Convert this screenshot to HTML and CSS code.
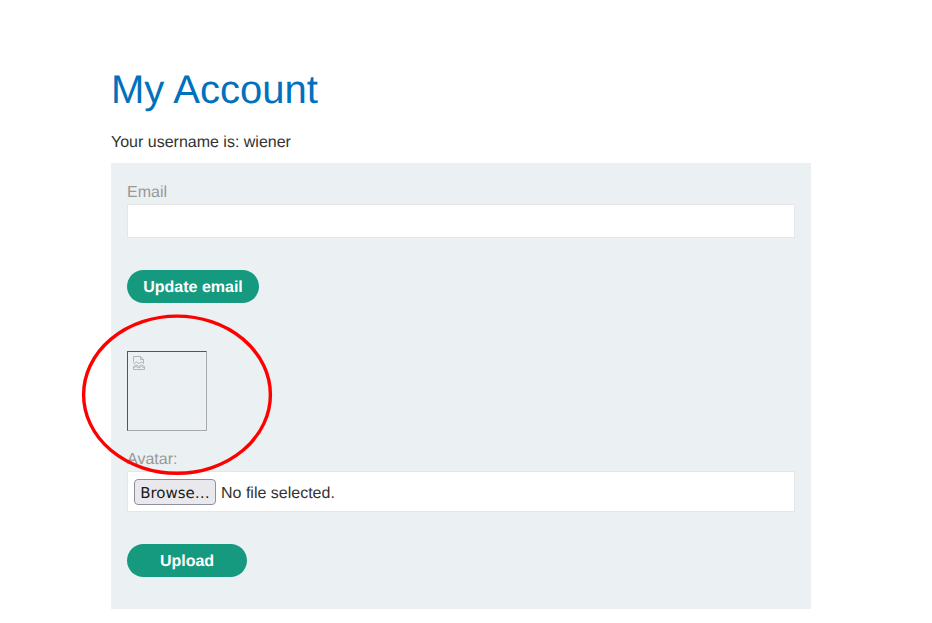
FILE: index.html
```html
<!DOCTYPE html>
<html lang="en">

<head>
    <meta charset="UTF-8">
    <meta name="viewport" content="width=device-width, initial-scale=1.0">
    <title>My Account</title>
    <link rel="stylesheet" href="styles.css">
</head>

<body>
    <div class="container">
        <h1>My Account</h1>
        <p class="username">Your username is: wiener</p>

        <div class="panel">
            <form class="email-form">
                <label class="field-label" for="email">Email</label>
                <input class="email-input" type="text" id="email">
                <button class="btn btn-update" type="button">Update email</button>
            </form>

            <form class="avatar-form">
                <div class="broken-img">
                    <svg class="broken-icon" width="12" height="14" viewBox="0 0 12 14" fill="none" stroke="#b4b8ba" stroke-width="1">
                        <path d="M.5 6.5V.5H7.5L10.5 3.5V7.5L8.5 6L6 7.5L3.5 6L.5 8"/>
                        <path d="M7.5 .5V3.5H10.5"/>
                        <path d="M.5 13.5V10.5L3 9L6 10.5L8.5 9L11.5 10.5V13.5Z"/>
                        <path d="M.5 12L3 10.5L6 12L8.5 10.5L11.5 12"/>
                    </svg>
                </div>
                <label class="field-label avatar-label">Avatar:</label>
                <div class="file-box">
                    <button class="browse" type="button">Browse…</button>
                    <span class="file-name">No file selected.</span>
                </div>
                <button class="btn btn-upload" type="button">Upload</button>
            </form>

            <!-- red circle marked on the screenshot -->
            <svg class="marker" width="194" height="164" viewBox="0 0 194 164" fill="none">
                <ellipse cx="97" cy="82.7" rx="93.4" ry="78.6" stroke="#fe0000" stroke-width="3.4"/>
            </svg>
        </div>
    </div>
</body>

</html>
```

FILE: styles.css
```css
body {
    margin: 0;
    padding: 0;
    background: #fff;
    font-family: "Liberation Sans", Arial, sans-serif;
    font-size: 16px;
    color: #333332;
    text-rendering: geometricPrecision;
}

.container {
    width: 700px;
    margin-left: 111px;
    padding-top: 67px;
    padding-bottom: 14px;
}

h1 {
    margin: 0;
    font-size: 40px;
    font-weight: 400;
    line-height: 46px;
    color: #0071bc;
}

.username {
    margin: 21px 0 0 0;
    line-height: 18px;
}

.panel {
    position: relative;
    margin-top: 11px;
    height: 446px;
    padding: 21px 16px 0 16px;
    box-sizing: border-box;
    background: #ebf0f2;
}

.field-label {
    display: block;
    line-height: 18px;
    color: #999;
}

.email-input {
    display: block;
    width: 100%;
    height: 34px;
    margin-top: 2px;
    padding: 0;
    background: #fff;
    border: 1px solid #e6e6e6;
    box-sizing: border-box;
}

.btn {
    display: block;
    height: 33px;
    padding: 2px 0 0 0;
    border: none;
    border-radius: 17px;
    background: #159a7f;
    color: #fff;
    font-family: inherit;
    font-size: 16px;
    font-weight: 700;
    text-rendering: geometricPrecision;
}

.btn-update {
    width: 132px;
    margin-top: 32px;
}

.avatar-form {
    margin-top: 48px;
}

.broken-img {
    width: 80px;
    height: 80px;
    padding: 4px 0 0 5px;
    box-sizing: border-box;
    border: 1px solid;
    border-color: #555 #a9a9a9 #a9a9a9 #555;
}

.broken-icon {
    display: block;
}

.avatar-label {
    margin-top: 20px;
}

.file-box {
    display: flex;
    align-items: center;
    gap: 5px;
    height: 41px;
    margin-top: 2px;
    padding-left: 6px;
    background: #fff;
    border: 1px solid #e6e6e6;
    box-sizing: border-box;
}

.browse {
    width: 82px;
    height: 26px;
    padding: 2px 0 0 0;
    background: #e9e9ed;
    border: 1px solid #8f8f9d;
    border-radius: 4px;
    font-family: "DejaVu Sans", sans-serif;
    font-size: 15px;
    color: #1a1a1a;
    text-rendering: geometricPrecision;
}

.file-name {
    padding-top: 4px;
}

.btn-upload {
    width: 120px;
    margin-top: 32px;
}

.marker {
    position: absolute;
    left: -31px;
    top: 149px;
}
```
